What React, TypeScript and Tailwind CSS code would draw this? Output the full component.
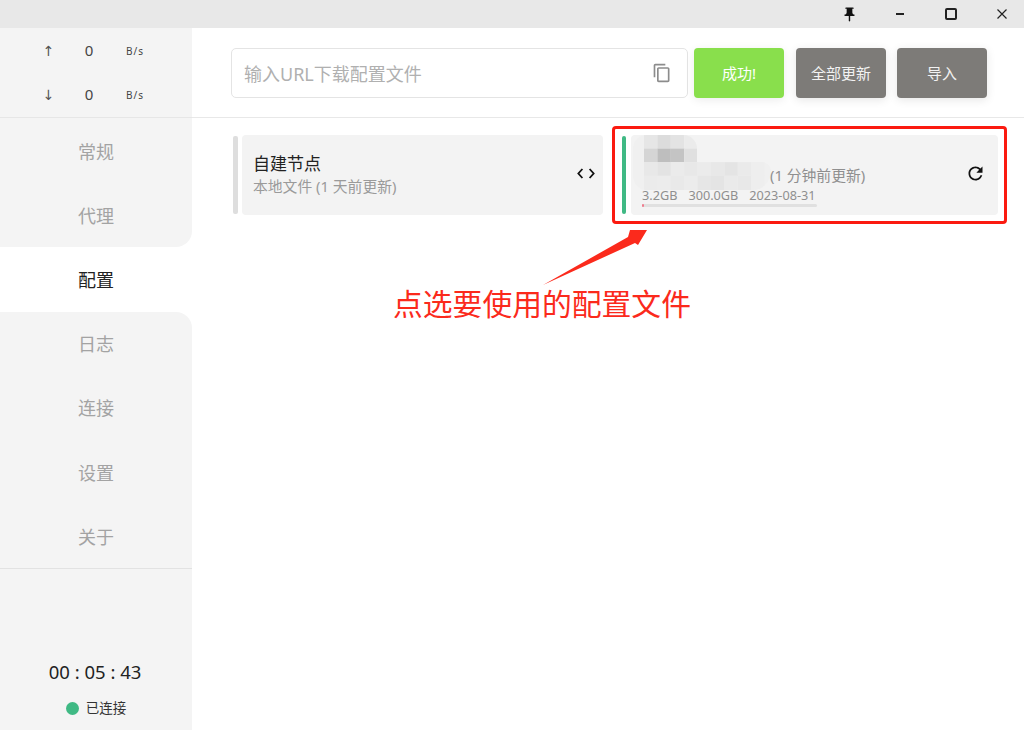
import React from "react";

const cjk = "font-['Noto_Sans','Noto_Sans_CJK_SC',sans-serif]";

// sidebar menu
const menu = ["常规", "代理", "配置", "日志", "连接", "设置", "关于"];
const activeIndex = 2;

// mosaic cells that hide the profile name: [col, row, colour]
const mosaic: [number, number, string][] = [
  [0, 0, "#e6e6e6"], [1, 0, "#dcdcdc"], [2, 0, "#e3e3e3"], [3, 0, "#ebebeb"],
  [0, 1, "#d5d5d5"], [1, 1, "#bebebe"], [2, 1, "#c4c4c4"], [3, 1, "#e0e0e0"],
  [0, 2, "#e8e8e8"], [1, 2, "#e3e3e3"], [2, 2, "#ebebeb"], [3, 2, "#e8e8e8"],
  [4, 2, "#ebebeb"], [5, 2, "#e8e8e8"], [6, 2, "#e4e4e4"], [7, 2, "#eaeaea"], [8, 2, "#eeeeee"],
  [0, 3, "#ebebeb"], [1, 3, "#ececec"], [2, 3, "#e9e9e9"], [3, 3, "#ececec"],
  [4, 3, "#e6e6e6"], [5, 3, "#e4e4e4"], [6, 3, "#eaeaea"], [7, 3, "#e8e8e8"], [8, 3, "#eeeeee"],
];

const Stat = ({ arrow }: { arrow: string }) => (
  <div className="flex items-center h-[44px]">
    <span className="w-[97px] mr-[-8px] text-center text-[14px] text-[#555555] font-['DejaVu_Sans',sans-serif]">{arrow}</span>
    <span className="w-[0px] flex justify-center text-[15px] leading-[20px] mb-[3px] text-[#444444]">0</span>
    <span className="ml-[37px] text-[10px] tracking-[1px] text-[#444444]">B/s</span>
  </div>
);

const Sidebar = () => (
  <aside className="w-[192px] shrink-0 flex flex-col bg-white">
    <div className="h-[91px] bg-[#f4f4f4]">
      <div className="h-[90px] pt-[1px] border-b border-[#e6e6e6] flex flex-col">
        <Stat arrow="↑" />
        <Stat arrow="↓" />
      </div>
    </div>
    <nav className="flex flex-col">
      {menu.map((item, i) => (
        <div
          key={item}
          className={`h-[64.2px] pt-[2px] flex items-center justify-center text-[18px] ${
            i === activeIndex ? "bg-white text-[#222222]" : "bg-[#f4f4f4] text-[#a3a3a3]"
          } ${i === activeIndex - 1 ? "rounded-br-[16px]" : ""} ${i === activeIndex + 1 ? "rounded-tr-[16px]" : ""}`}
        >
          {item}
        </div>
      ))}
    </nav>
    <div className="flex-1 bg-[#f4f4f4] border-t border-[#e2e2e2] flex flex-col items-center">
      <div className="mt-[91px] mr-[2px] h-[24px] leading-[24px] text-[18.5px] text-[#222222] font-['Noto_Sans',sans-serif]">00 : 05 : 43</div>
      <div className="mt-[14px] flex items-center gap-[7px] text-[13.5px] text-[#333333]">
        <span className="w-[13px] h-[13px] rounded-full bg-[#3fb984]" />
        已连接
      </div>
    </div>
  </aside>
);

const TitleBar = () => (
  <div className="h-[28px] bg-[#e8e8e8] flex items-center justify-end shrink-0">
    <svg viewBox="0 0 24 24" className="w-[17px] h-[17px] mr-[38px] fill-[#111111]">
      <path d="M16 9V4h1c.55 0 1-.45 1-1s-.45-1-1-1H7c-.55 0-1 .45-1 1s.45 1 1 1h1v5c0 1.66-1.34 3-3 3v2h5.97v7l1 1 1-1v-7H19v-2c-1.66 0-3-1.34-3-3z" />
    </svg>
    <div className="w-[8px] h-[2px] bg-[#222222] mr-[41px]" />
    <div className="w-[12px] h-[12px] border-2 border-[#222222] rounded-[2px] mr-[40px]" />
    <svg viewBox="0 0 10 10" className="w-[10px] h-[10px] mr-[17px] stroke-[#222222] stroke-[1.2]">
      <path d="M0.5 0.5L9.5 9.5M9.5 0.5L0.5 9.5" />
    </svg>
  </div>
);

const ProfileBar = () => (
  <div className="h-[90px] pt-[1px] border-b border-[#e8e8e8] flex items-center pl-[39px] shrink-0">
    <div className="w-[457px] h-[50px] bg-white border border-[#e4e4e4] rounded-[5px] flex items-center pl-[12px] pr-[15px] mr-[6px]">
      <span className="flex-1 pt-[2px] text-[18px] text-[#b0b0b0]">输入URL下载配置文件</span>
      <svg viewBox="0 0 24 24" className="w-[20px] h-[20px] fill-[#8c8c8c]">
        <path d="M16 1H4c-1.1 0-2 .9-2 2v14h2V3h12V1zm3 4H8c-1.1 0-2 .9-2 2v14c0 1.1.9 2 2 2h11c1.1 0 2-.9 2-2V7c0-1.1-.9-2-2-2zm0 16H8V7h11v14z" />
      </svg>
    </div>
    <button className="w-[90px] h-[50px] rounded-[4px] bg-[#89df4c] text-white text-[15px] shadow-[0_2px_10px_rgba(0,0,0,0.08)] mr-[12px]">成功!</button>
    <button className="w-[90px] h-[50px] rounded-[4px] bg-[#7d7b78] text-[#f2f2f2] text-[15px] shadow-[0_2px_10px_rgba(0,0,0,0.1)] mr-[11px]">全部更新</button>
    <button className="w-[90px] h-[50px] rounded-[4px] bg-[#7d7b78] text-[#f2f2f2] text-[15px] shadow-[0_2px_10px_rgba(0,0,0,0.1)]">导入</button>
  </div>
);

const LocalCard = () => (
  <div className="w-[369px] flex items-stretch mr-[19px]">
    <div className="w-[5px] my-[1px] rounded-[2px] bg-[#dedede] mr-[4px] ml-[-1px]" />
    <div className="flex-1 h-[80px] bg-[#f3f3f3] rounded-[4px] flex items-center pl-[11px] pr-[8px]">
      <div className="flex-1 flex flex-col">
        <span className="text-[17px] leading-[24px] mt-[-3px] text-[#222222]">自建节点</span>
        <span className="text-[14.8px] leading-[20px] text-[#9a9a9a]">本地文件 (1 天前更新)</span>
      </div>
      <svg viewBox="0 0 20 12" className="w-[18px] h-[11px] mb-[4px] fill-none stroke-[#111111] stroke-[2]">
        <path d="M6 1L1.5 6L6 11M14 1L18.5 6L14 11" />
      </svg>
    </div>
  </div>
);

const RemoteCard = () => (
  <div className="w-[376px] flex items-stretch">
    <div className="w-[4px] my-[1px] rounded-[2px] bg-[#3fb984] mr-[5px]" />
    <div className="relative flex-1 h-[80px] bg-[#f3f3f3] rounded-[4px] pl-[11px]">
      <svg viewBox="0 0 140 55" className="absolute left-0 top-0 w-[140px] h-[55px]">
        <defs>
          <clipPath id="nameShape">
            <path d="M15 0H52C60 0 66 6 66 14V27H130C136 27 140 31 140 36C140 46 132 55 122 55H15C7 55 2 48 2 40V14C2 6 8 0 15 0Z" />
          </clipPath>
        </defs>
        <g clipPath="url(#nameShape)">
          <rect x="0" y="0" width="140" height="55" fill="#f0f0f0" />
          {mosaic.map(([col, row, colour]) => (
            <rect key={`${col}-${row}`} x={col * 13.4 + 13} y={row * 13.6} width="13.4" height={row === 3 ? 15 : 13.6} fill={colour} />
          ))}
        </g>
      </svg>
      <span className="absolute left-[139px] top-[30px] text-[14.8px] leading-[20px] text-[#8f8f8f]">(1 分钟前更新)</span>
      <div className="absolute left-[11px] top-[51px] flex gap-[11px] text-[12.7px] leading-[18px] text-[#8f8f8f]">
        <span>3.2GB</span>
        <span>300.0GB</span>
        <span>2023-08-31</span>
      </div>
      <div className="absolute left-[11px] top-[69px] w-[175px] h-[3px] rounded-full bg-[#e0e0e0]">
        <div className="w-[2px] h-[3px] rounded-full bg-[#ef7c8e]" />
      </div>
      <svg viewBox="0 0 24 24" className="absolute left-[334px] top-[28px] w-[21px] h-[21px] fill-[#111111]">
        <path d="M17.65 6.35C16.2 4.9 14.21 4 12 4c-4.42 0-7.99 3.58-7.99 8s3.57 8 7.99 8c3.73 0 6.84-2.55 7.73-6h-2.08c-.82 2.33-3.04 4-5.65 4-3.31 0-6-2.69-6-6s2.69-6 6-6c1.66 0 3.14.69 4.22 1.78L13 11h7V4l-2.35 2.35z" />
      </svg>
    </div>
  </div>
);

const App = () => {
  return (
    <div className={`relative w-[1024px] h-[730px] overflow-hidden flex flex-col bg-white ${cjk}`}>
      <TitleBar />
      <div className="flex-1 flex min-h-0">
        <Sidebar />
        <main className="flex-1 flex flex-col">
          <ProfileBar />
          <div className="flex pl-[42px] pt-[17px]">
            <LocalCard />
            <RemoteCard />
          </div>
        </main>
      </div>

      {/* red annotation drawn on top of the screenshot */}
      <div className="absolute left-[612px] top-[126px] w-[395px] h-[98px] border-[3px] border-[#fb1a10] rounded-[4px]" />
      <svg viewBox="0 0 110 60" className="absolute left-[540px] top-[226px] w-[110px] h-[60px]">
        <path d="M3 59L88 11L90 4L107 4L98 19L95 17Z" fill="#fb2a1c" />
      </svg>
      <span className="absolute left-[393px] top-[284px] text-[29.8px] leading-[40px] text-[#fb2a1c] whitespace-nowrap">点选要使用的配置文件</span>
    </div>
  );
};

export default App;
